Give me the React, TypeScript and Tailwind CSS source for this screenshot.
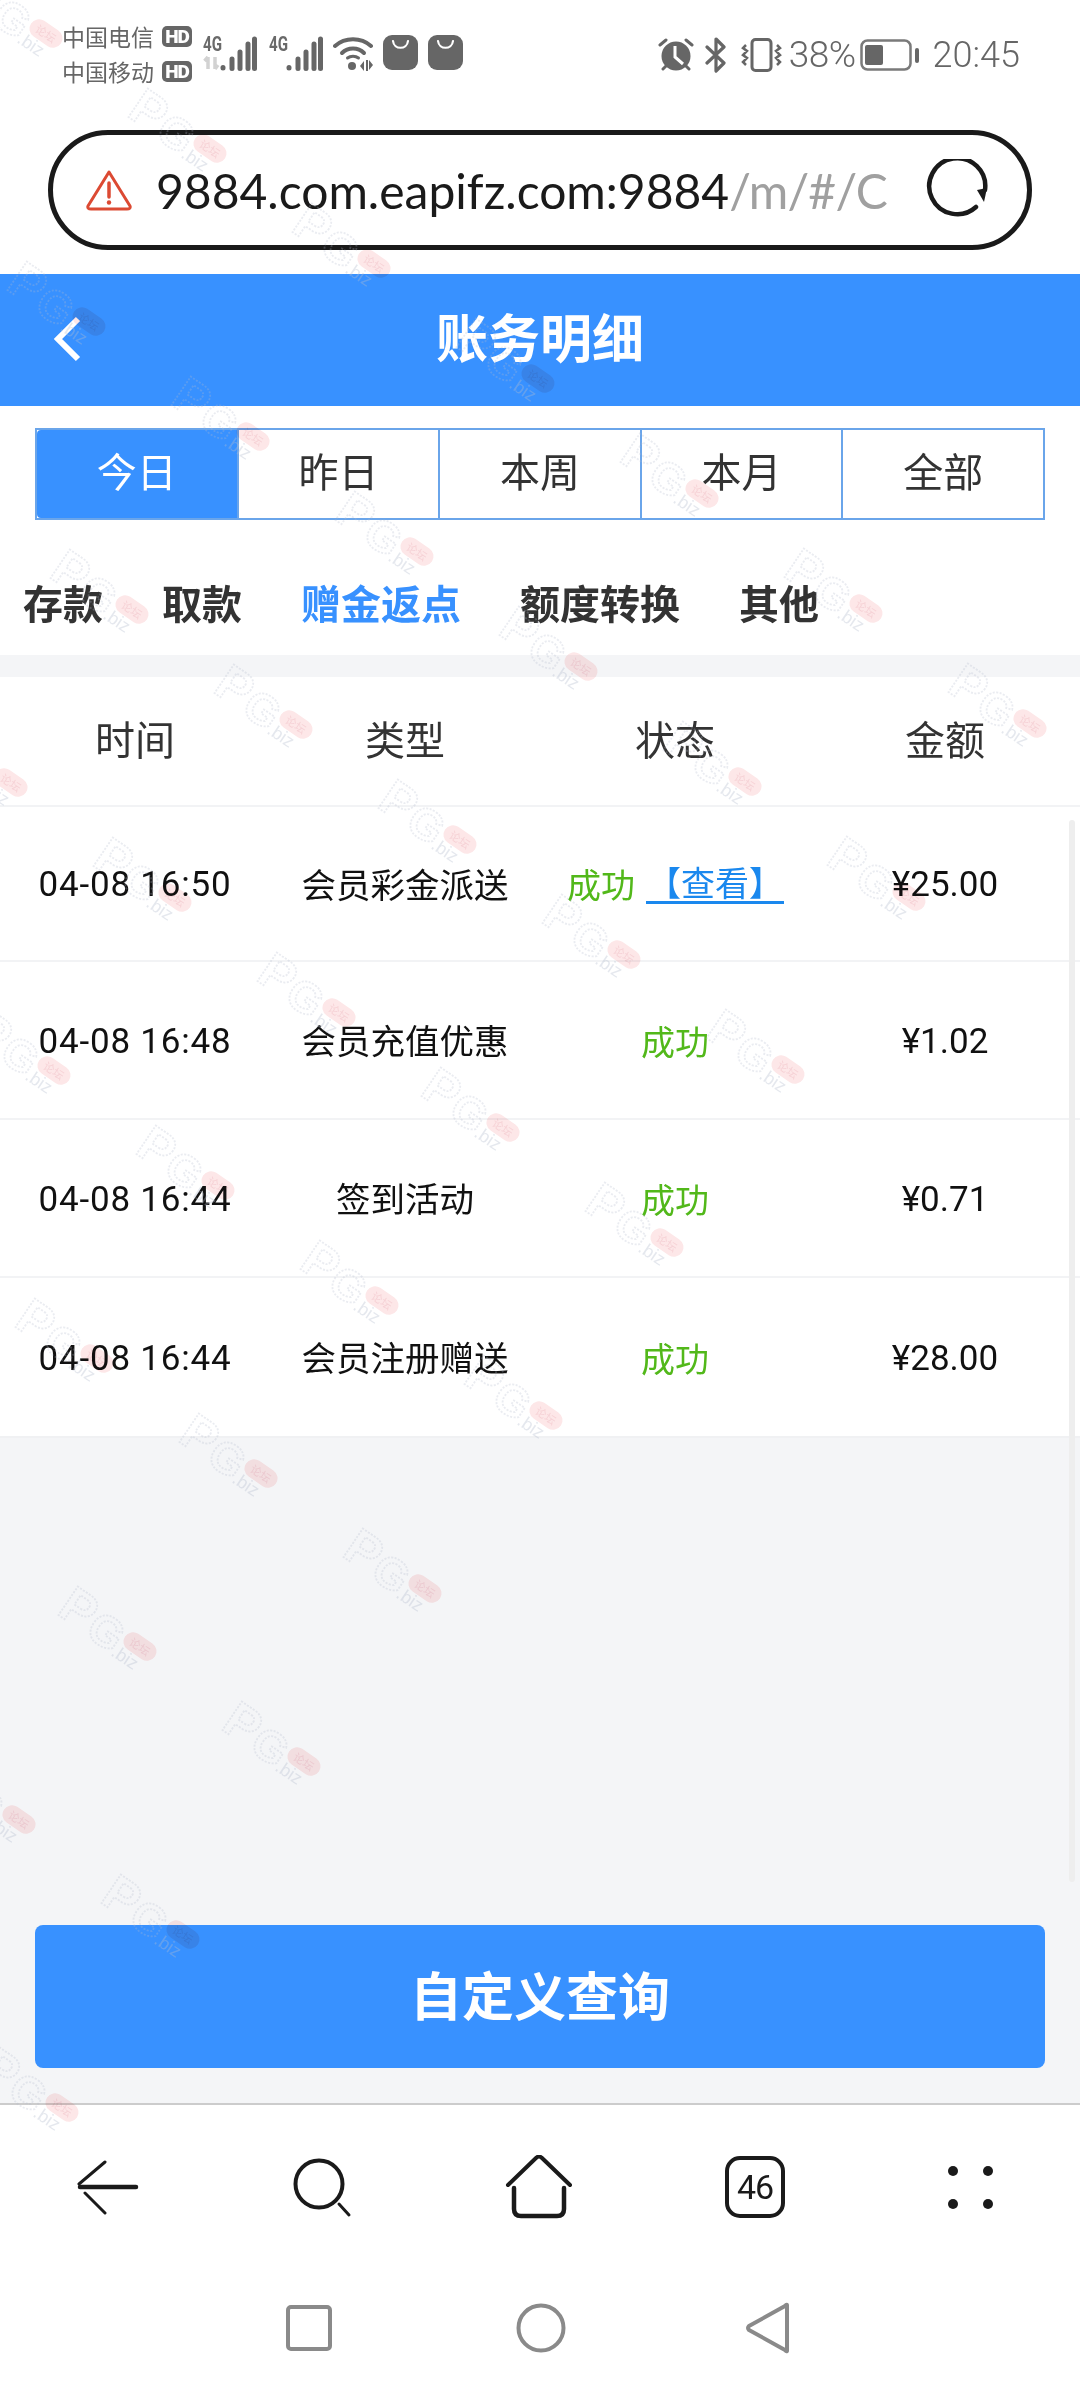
import React from "react";

const CJK = '"Noto Sans CJK SC", "Noto Sans", sans-serif';
const sans = { fontFamily: 'Roboto, "Noto Sans CJK SC", sans-serif' };

function Signal({ weak }: { weak?: boolean }) {
  return (
    <svg width="54" height="36" viewBox="0 0 54 36" className="shrink-0">
      <text x="0" y="16" fontSize="20" fontWeight="700" fill="#6a6a6a" textLength="19" lengthAdjust="spacingAndGlyphs" fontFamily="Roboto, sans-serif">4G</text>
      {weak && (
        <path d="M5 22v12M1.500 26l3.500-4M12 22v12M12 34l3-4" stroke="#d2d2d2" strokeWidth="3.500" fill="none" />
      )}
      <g stroke="#666" strokeWidth="5" strokeLinecap="round">
        <path d="M20 32.500v.5" />
        <path d="M29 24v9.500" />
        <path d="M37 17v16.500" />
        <path d="M45 9v24.500" />
        <path d="M51.500 4v29.500" />
      </g>
    </svg>
  );
}

function Wifi() {
  return (
    <svg width="40" height="36" viewBox="0 0 40 36" className="shrink-0">
      <g fill="none" stroke="#666" strokeWidth="4" strokeLinecap="round">
        <path d="M2 11C12 2 28 2 38 11" />
        <path d="M9 18C15 12 25 12 31 18" />
      </g>
      <path d="M14.500 23c3-2.500 8-2.500 11 0" fill="none" stroke="#666" strokeWidth="3" strokeLinecap="round" />
      <circle cx="19" cy="31" r="4" fill="#666" />
      <path d="M27 31l4-5v10zM33 25h2v11h-2zM36 25v10l4-5z" fill="#666" />
    </svg>
  );
}

function Bag() {
  return (
    <svg width="35" height="35" viewBox="0 0 35 35" className="shrink-0">
      <rect width="35" height="35" rx="9" fill="#666" />
      <path d="M10 6c1 9 14 9 15 0" fill="none" stroke="#fff" strokeWidth="2.200" strokeLinecap="round" />
    </svg>
  );
}

function HD() {
  return (
    <span className="flex h-[21px] w-[30px] items-center justify-center rounded-[5px] bg-[#666666] text-[19px] font-black leading-none tracking-[-1px] text-white" style={{ fontFamily: "Roboto, sans-serif" }}>
      HD
    </span>
  );
}

function StatusBar() {
  return (
    <div className="flex h-[130px] shrink-0 items-start justify-between pl-[62px] pr-[60px] pt-[25px] text-[#666666]" style={{ fontFamily: CJK }}>
      <div className="flex items-start">
        <div className="flex w-[130px] flex-col gap-[14px] pt-[1px]">
          <div className="flex h-[21px] items-center gap-[7px] text-[23px] leading-none"><span className="w-[93px] whitespace-nowrap">中国电信</span><HD /></div>
          <div className="flex h-[21px] items-center gap-[7px] text-[23px] leading-none"><span className="w-[93px] whitespace-nowrap">中国移动</span><HD /></div>
        </div>
        <div className="ml-[11px] flex items-start gap-[12px] pt-[10px]">
          <Signal weak />
          <Signal />
          <div className="ml-[-2px] flex gap-[10px]"><Wifi /><Bag /><Bag /></div>
        </div>
      </div>
      <div className="flex items-center pt-[11px]">
        <svg width="38" height="34" viewBox="0 0 38 34" className="mr-[10px]">
          <circle cx="19" cy="18" r="14.500" fill="#666" />
          <path d="M18 8v11l8 7" fill="none" stroke="#fff" strokeWidth="3" />
          <path d="M3 7l6-5M35 7l-6-5M6 31l3-3M32 31l-3-3" stroke="#666" strokeWidth="3" strokeLinecap="round" />
        </svg>
        <svg width="23" height="36" viewBox="0 0 23 36" className="mr-[13px]">
          <path d="M2 10L19 26 11 34V2l8 8L2 26" fill="none" stroke="#666" strokeWidth="3.200" strokeLinejoin="round" strokeLinecap="round" />
        </svg>
        <svg width="41" height="34" viewBox="0 0 41 34" className="mr-[7px]">
          <rect x="11" y="1.500" width="19" height="31" rx="3.500" fill="none" stroke="#666" strokeWidth="3" />
          <path d="M5 7l-3 3 4 3-4 4 4 3-4 4 3 3M36 7l3 3-4 3 4 4-4 3 4 4-3 3" fill="none" stroke="#666" strokeWidth="2.500" />
        </svg>
        <span className="text-[37px] leading-none tracking-[-0.5px]" style={{ fontFamily: "Roboto, sans-serif", fontWeight: 300 }}>38%</span>
        <svg width="60" height="32" viewBox="0 0 60 32" className="ml-[4px] mr-[13px]">
          <rect x="1.500" y="1.500" width="49" height="29" rx="6" fill="none" stroke="#7a7a7a" strokeWidth="2.500" />
          <rect x="5" y="6" width="18" height="20" rx="2" fill="#666" />
          <rect x="55" y="9" width="4" height="15" rx="2" fill="#666" />
        </svg>
        <span className="text-[36px] leading-none" style={{ fontFamily: "Roboto, sans-serif", fontWeight: 300 }}>20:45</span>
      </div>
    </div>
  );
}

function UrlBar() {
  return (
    <div className="flex h-[144px] shrink-0 items-start px-[48px]">
      <div className="flex h-[120px] w-[984px] items-center rounded-full border-[5px] border-[#1a1a1a] bg-white pl-[33px]">
        <svg width="46" height="42" viewBox="0 0 46 42" className="shrink-0">
          <path d="M23 3L44 37Q45 40 41 40H5Q1 40 2 37Z" fill="none" stroke="#dc4a33" strokeWidth="3" strokeLinejoin="round" />
          <path d="M23 14v14" stroke="#dc4a33" strokeWidth="3.500" strokeLinecap="round" />
          <circle cx="23" cy="33.500" r="2.200" fill="#dc4a33" />
        </svg>
        <span className="ml-[24px] mt-[2px] w-[735px] whitespace-nowrap text-[48px] leading-none text-[#1a1a1a]" style={{ fontFamily: "Lato, sans-serif" }}>
          9884.com.eapifz.com:9884<span className="tracking-[-0.8px] text-[#a0a0a0]">/m/#/C</span>
        </span>
        <svg width="62" height="62" viewBox="0 0 62 62" className="ml-[35px] shrink-0">
          <path d="M50 48A28 28 0 1 1 59 31" fill="none" stroke="#1a1a1a" strokeWidth="4.500" strokeLinecap="round" />
          <path d="M51 31L61 29 58 43Z" fill="#1a1a1a" />
        </svg>
      </div>
    </div>
  );
}

function Header() {
  return (
    <div className="relative flex h-[132px] shrink-0 items-center justify-center bg-[#3891ff] pb-[8px]">
      <svg width="30" height="46" viewBox="0 0 30 46" className="absolute left-[52px] top-[42px]">
        <path d="M26 3L6 23 26 43" fill="none" stroke="#fff" strokeWidth="6" />
      </svg>
      <span className="text-[52px] font-bold leading-none text-white">账务明细</span>
    </div>
  );
}

const ranges = ["今日", "昨日", "本周", "本月", "全部"];

function RangeTabs() {
  return (
    <div className="mx-[35px] mt-[22px] flex h-[92px] shrink-0 border-2 border-[#6aa5ea]">
      {ranges.map((r, i) => (
        <div
          key={r}
          className={
            i === 0
              ? "flex flex-1 items-center justify-center rounded-l-[4px] bg-[#3891ff] pb-[8px] text-[40px] text-white"
              : "flex flex-1 items-center justify-center border-l-2 border-[#6aa5ea] bg-white pb-[8px] text-[40px] text-[#333333]"
          }
        >
          {r}
        </div>
      ))}
    </div>
  );
}

const cats = ["存款", "取款", "赠金返点", "额度转换", "其他"];

function CatTabs() {
  return (
    <div className="flex h-[135px] shrink-0 items-center gap-[59px] bg-white pl-[23px] pt-[28px]">
      {cats.map((c, i) => (
        <span key={c} className={i === 2 ? "text-[40px] font-bold leading-none text-[#3891ff]" : "text-[40px] font-bold leading-none text-[#333333]"}>
          {c}
        </span>
      ))}
    </div>
  );
}

const rows = [
  ["04-08 16:50", "会员彩金派送", "¥25.00"],
  ["04-08 16:48", "会员充值优惠", "¥1.02"],
  ["04-08 16:44", "签到活动", "¥0.71"],
  ["04-08 16:44", "会员注册赠送", "¥28.00"],
];

const rowHeights = ["h-[155px]", "h-[158px]", "h-[158px]", "h-[158px]"];

function Table() {
  return (
    <div className="shrink-0 bg-white">
      <div className="grid h-[130px] grid-cols-4 items-center border-b-2 border-[#f2f3f5] pb-[6px] text-center text-[40px] text-[#333333]">
        <span>时间</span>
        <span>类型</span>
        <span>状态</span>
        <span>金额</span>
      </div>
      {rows.map((r, i) => (
        <div key={i} className={`grid ${rowHeights[i]} grid-cols-4 items-center text-center text-[34.5px] text-[#111111] ${i < 3 ? "border-b-2 border-[#f2f3f5]" : ""}`}>
          <span className="pt-[4px] text-[35px] tracking-[0.8px]" style={sans}>{r[0]}</span>
          <span>{r[1]}</span>
          {i === 0 ? (
            <span className="ml-[27px] flex items-center whitespace-nowrap">
              <span className="text-[34px] text-[#52b81a]">成功</span>
              <span className="ml-[11px] w-[138px] border-b-[3px] border-[#1a88ee] text-center text-[34px] leading-[38px] text-[#1a88ee]">【查看】</span>
            </span>
          ) : (
            <span className="text-[34px] text-[#52b81a]">成功</span>
          )}
          <span className="pt-[4px] text-[35px]" style={sans}>{r[2]}</span>
        </div>
      ))}
    </div>
  );
}

function Toolbar() {
  return (
    <div className="relative flex h-[165px] shrink-0 items-start border-t-2 border-[#cccccc] bg-white pl-[76px] pt-[55px]">
      <svg width="64" height="56" viewBox="0 0 64 56">
        <path d="M4 27H60" stroke="#1a1a1a" strokeWidth="4.500" strokeLinecap="round" />
        <path d="M3 24L29 2M9 33L29 53" stroke="#1a1a1a" strokeWidth="3" strokeLinecap="round" fill="none" />
      </svg>
      <svg width="60" height="62" viewBox="0 0 60 62" className="ml-[153px] mt-[-3px]">
        <circle cx="26" cy="27" r="23.500" fill="none" stroke="#1a1a1a" strokeWidth="4" />
        <path d="M46 47L56 58" stroke="#1a1a1a" strokeWidth="3" strokeLinecap="round" />
      </svg>
      <svg width="68" height="64" viewBox="0 0 68 64" className="ml-[152px] mt-[-5px]">
        <path d="M3 30L31 3Q34 0 37 3L65 30" fill="none" stroke="#1a1a1a" strokeWidth="4" strokeLinecap="round" />
        <path d="M9 33V54Q9 61 16 61H52Q59 61 59 54V33" fill="none" stroke="#1a1a1a" strokeWidth="4.500" strokeLinecap="round" />
      </svg>
      <div className="ml-[152px] mt-[-4px] flex h-[62px] w-[60px] items-center justify-center rounded-[15px] border-[4px] border-[#1a1a1a] text-[34px] leading-none tracking-[-1px] text-[#1a1a1a]" style={{ fontFamily: "Roboto, sans-serif" }}>
        46
      </div>
      <svg width="46" height="46" viewBox="0 0 46 46" className="ml-[163px] mt-[6px]">
        <circle cx="5" cy="5" r="5" fill="#1a1a1a" />
        <circle cx="40" cy="5" r="5" fill="#1a1a1a" />
        <circle cx="5" cy="38" r="5" fill="#1a1a1a" />
        <circle cx="40" cy="38" r="5" fill="#1a1a1a" />
      </svg>
    </div>
  );
}

function NavBar() {
  return (
    <div className="flex h-[120px] shrink-0 items-start bg-white pl-[286px] pt-[37px]">
      <svg width="46" height="46" viewBox="0 0 46 46">
        <rect x="2" y="2" width="42" height="42" rx="3" fill="none" stroke="#8a8a8a" strokeWidth="4" />
      </svg>
      <svg width="50" height="50" viewBox="0 0 50 50" className="ml-[184px] mt-[-2px]">
        <circle cx="25" cy="25" r="22.500" fill="none" stroke="#8a8a8a" strokeWidth="4" />
      </svg>
      <svg width="46" height="52" viewBox="0 0 46 52" className="ml-[179px] mt-[-3px]">
        <path d="M42 3V49Q42 50 40 48L4 28Q2 26 4 24L40 4Q42 2 42 3Z" fill="none" stroke="#8a8a8a" strokeWidth="4" strokeLinejoin="round" />
      </svg>
    </div>
  );
}

function Mark({ x, y }: { x: number; y: number }) {
  return (
    <>
      <svg width="130" height="130" viewBox="-100 -65 130 130" className="absolute" style={{ left: x - 100, top: y - 65 }}>
        <g transform="rotate(34)">
          <text x="-88" y="20" fontSize="50" fontWeight="900" fill="none" stroke="#b4bccd" strokeOpacity="0.28" strokeWidth="1.800" strokeDasharray="2 1.500" fontFamily="Liberation Sans, sans-serif">P</text>
          <text x="-53" y="22" fontSize="44" fontWeight="900" fill="none" stroke="#b4bccd" strokeOpacity="0.28" strokeWidth="1.800" strokeDasharray="2 1.500" fontFamily="Liberation Sans, sans-serif">G</text>
          <text x="-20" y="24" fontSize="18" fill="#b4bccd" fillOpacity="0.35" fontFamily="Liberation Sans, sans-serif">.biz</text>
        </g>
      </svg>
      <div
        className="absolute flex h-[19px] w-[36px] rotate-[34deg] items-center justify-center rounded-full bg-[#fde7e8] text-[11px] leading-none text-[#f6d2d6] mix-blend-multiply"
        style={{ left: x - 18, top: y - 9.5 }}
      >
        论坛
      </div>
    </>
  );
}

const marks: { x: number; y: number }[] = [];
for (let i = -5; i <= 1; i++) {
  for (let j = -5; j <= 3; j++) {
    const x = 261 + 164 * i - 121 * j;
    const y = 1473 + 115 * i + 173 * j;
    if (x > -40 && x < 1170 && y > 20 && y < 2130) marks.push({ x, y });
  }
}

export default function App() {
  return (
    <div className="relative flex h-[2388px] w-[1080px] flex-col overflow-hidden bg-white" style={{ fontFamily: CJK }}>
      <StatusBar />
      <UrlBar />
      <Header />
      <RangeTabs />
      <CatTabs />
      <div className="h-[22px] shrink-0 bg-[#f4f5f7]" />
      <Table />
      <div className="flex min-h-0 flex-1 flex-col items-stretch justify-end border-t-2 border-[#f0f1f3] bg-[#f4f5f7] px-[35px] pb-[35px]">
        <button className="flex h-[143px] items-center justify-center rounded-[8px] bg-[#3891ff] pb-[6px] text-[52px] font-bold text-white">
          自定义查询
        </button>
      </div>
      <Toolbar />
      <NavBar />
      <div className="absolute left-[1069px] top-[820px] h-[1062px] w-[6px] rounded-full bg-[#eeeeee]" />
      <div className="pointer-events-none absolute inset-0">
        {marks.map((m, i) => (
          <Mark key={i} x={m.x} y={m.y} />
        ))}
      </div>
    </div>
  );
}
